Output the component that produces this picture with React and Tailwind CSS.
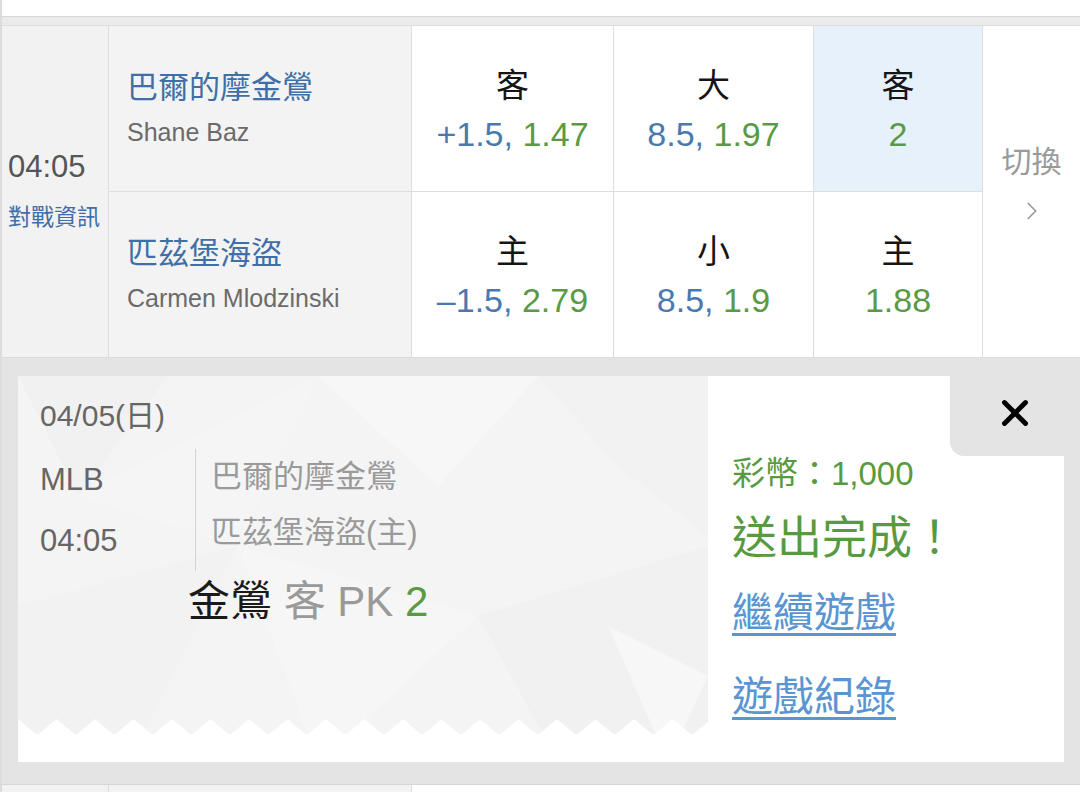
import { X, ChevronRight } from 'lucide-react'

const font = { fontFamily: '"Liberation Sans", "Noto Sans CJK TC", sans-serif' }

function TeamCell({ name, player }) {
  return (
    <div className="flex w-[303px] flex-col justify-center border-r border-[#dedede] bg-[#f3f3f3] pl-[18px] pt-[4px]">
      <div className="text-[31px] leading-[44px] text-[#3f6fa6]">{name}</div>
      <div className="text-[25px] leading-[44px] text-[#6b6b6b]">{player}</div>
    </div>
  )
}

function OddsCell({ label, a, b, w, hl }) {
  return (
    <div className={`flex ${w} flex-col items-center justify-center border-r border-[#dedede] pt-[3px] ${hl ? 'bg-[#e6f1fb]' : 'bg-white'}`}>
      <div className="text-[33px] leading-[48px] text-[#151515]">{label}</div>
      <div className="text-[34px] leading-[48px]">
        {a && <span className="text-[#4a79b0]">{a}, </span>}
        <span className="text-[#5b9a45]">{b}</span>
      </div>
    </div>
  )
}

function TicketPattern() {
  // faint low-poly backdrop behind the ticket stub
  return (
    <svg className="absolute inset-0 h-full w-full" viewBox="0 0 690 386" preserveAspectRatio="none">
      <rect width="690" height="386" fill="#f4f4f4" />
      <polygon points="0,0 150,0 60,120" fill="#f1f1f1" />
      <polygon points="300,0 520,0 420,110" fill="#f7f7f7" />
      <polygon points="520,0 690,0 690,160 600,90" fill="#f2f2f2" />
      <polygon points="0,230 220,170 110,386 0,386" fill="#f2f2f2" />
      <polygon points="220,170 460,240 300,386" fill="#f6f6f6" />
      <polygon points="460,240 690,170 690,386 540,386" fill="#f1f1f1" />
      <polygon points="590,250 690,300 650,386" fill="#f7f7f7" />
      <polygon points="60,120 300,0 220,170" fill="#f5f5f5" />
    </svg>
  )
}

function Sawtooth() {
  const teeth = []
  for (let i = 0; i < 19; i++) {
    const x = i * 38.5
    teeth.push(`${x - 19},16 ${x},0 ${x + 19},16`)
  }
  return (
    <svg className="relative block h-[43px] w-full" viewBox="0 0 690 43" preserveAspectRatio="none">
      <rect x="0" y="15" width="690" height="28" fill="#fff" />
      {teeth.map((p, i) => (
        <polygon key={i} points={p} fill="#fff" />
      ))}
    </svg>
  )
}

export default function App() {
  return (
    <div className="h-[792px] w-[1080px] overflow-hidden border-l-2 border-[#dcdcdc] bg-white" style={font}>
      {/* top strip */}
      <div className="h-[17px] border-b border-[#d8d8d8] bg-white" />
      <div className="h-[9px] border-b border-[#dcdcdc] bg-[#ebebeb]" />

      {/* match row */}
      <div className="flex h-[332px] border-b border-[#dcdcdc]">
        <div className="flex w-[107px] flex-col justify-center border-r border-[#dcdcdc] bg-[#f2f2f2] pb-[4px] pl-[6px]">
          <div className="text-[31px] leading-[40px] text-[#555]">04:05</div>
          <div className="mt-[15px] text-[23px] leading-[30px] text-[#3f6fa6]">對戰資訊</div>
        </div>
        <div className="flex flex-col">
          <div className="flex h-[166px] border-b border-[#dedede]">
            <TeamCell name="巴爾的摩金鶯" player="Shane Baz" />
            <OddsCell w="w-[202px]" label="客" a="+1.5" b="1.47" />
            <OddsCell w="w-[200px]" label="大" a="8.5" b="1.97" />
            <OddsCell w="w-[169px]" label="客" b="2" hl />
          </div>
          <div className="flex h-[166px]">
            <TeamCell name="匹茲堡海盜" player="Carmen Mlodzinski" />
            <OddsCell w="w-[202px]" label="主" a="–1.5" b="2.79" />
            <OddsCell w="w-[200px]" label="小" a="8.5" b="1.9" />
            <OddsCell w="w-[169px]" label="主" b="1.88" />
          </div>
        </div>
        <div className="flex flex-1 flex-col items-center justify-center pb-[16px] text-[#9a9a9a]">
          <div className="text-[30px] leading-[40px]">切換</div>
          <ChevronRight className="mt-[14px] h-[30px] w-[30px]" strokeWidth={1.4} />
        </div>
      </div>

      {/* result ticket overlay */}
      <div className="h-[426px] bg-[#e4e4e4] px-[16px] pt-[18px]">
        <div className="flex h-[386px]">
          <div className="relative flex w-[690px] flex-col">
            <TicketPattern />
            <div className="relative flex-1 pl-[22px] pt-[18px]">
              <div className="text-[30px] leading-[44px] text-[#666]">04/05(日)</div>
              <div className="mt-[11px] flex">
                <div className="w-[155px] text-[31px] text-[#666]">
                  <div className="leading-[61px]">MLB</div>
                  <div className="leading-[61px]">04:05</div>
                </div>
                <div className="border-l border-[#d2d2d2] pl-[15px] text-[31px] text-[#9a9a9a]">
                  <div className="leading-[56px]">巴爾的摩金鶯</div>
                  <div className="leading-[56px]">匹茲堡海盜(主)</div>
                </div>
              </div>
              <div className="ml-[148px] mt-[6px] text-[42px] leading-[50px]">
                <span className="text-[#1a1a1a]">金鶯</span>
                <span className="text-[#9a9a9a]"> 客 PK </span>
                <span className="text-[#5b9a45]">2</span>
              </div>
            </div>
            <Sawtooth />
          </div>
          <div className="flex flex-1 flex-col bg-white">
            <div className="flex justify-end">
              <div className="flex h-[80px] w-[114px] items-center justify-center rounded-bl-[14px] bg-[#e4e4e4] pl-[16px] pb-[6px]">
                <X className="h-[42px] w-[42px] text-black" strokeWidth={2.8} />
              </div>
            </div>
            <div className="pl-[24px]">
              <div className="text-[33px] leading-[36px] text-[#579a3f]">彩幣：1,000</div>
              <div className="mt-[22px] text-[45px] leading-[50px] text-[#579a3f]">送出完成！</div>
              <div className="mt-[25px] text-[41px] leading-[48px] text-[#5a95d2] underline decoration-[3px] underline-offset-[6px]">繼續遊戲</div>
              <div className="mt-[36px] text-[41px] leading-[48px] text-[#5a95d2] underline decoration-[3px] underline-offset-[6px]">遊戲紀錄</div>
            </div>
          </div>
        </div>
        <div className="h-[3px]" />
      </div>

      {/* next row peeking */}
      <div className="flex h-[20px] border-t border-[#d6d6d6]">
        <div className="w-[107px] border-r border-[#dcdcdc] bg-[#f2f2f2]" />
        <div className="w-[303px] border-r border-[#dedede] bg-[#f3f3f3]" />
        <div className="flex-1 bg-white" />
      </div>
    </div>
  )
}
